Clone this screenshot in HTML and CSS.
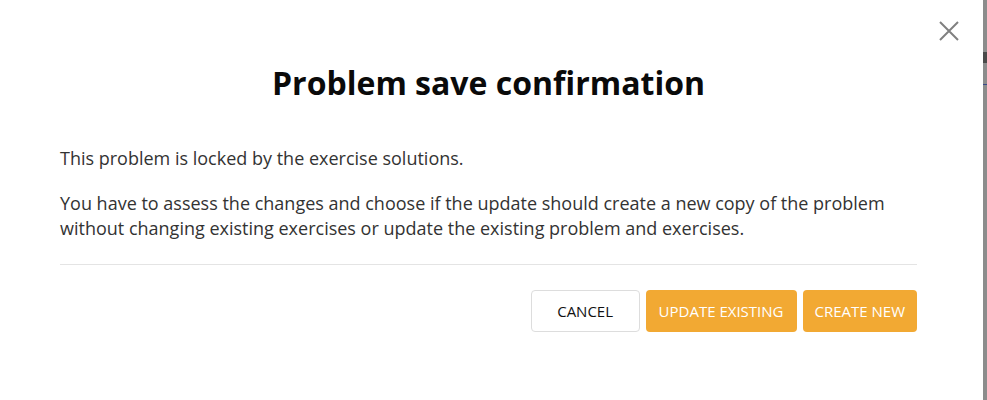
FILE: index.html
```html
<!DOCTYPE html>
<html lang="en">
<head>
<meta charset="utf-8">
<title>Problem save confirmation</title>
<link rel="stylesheet" href="styles.css">
</head>
<body>
<div class="page">
  <div class="modal">
    <button class="close" aria-label="Close">
      <svg width="20" height="20" viewBox="0 0 20 20"><path d="M1 1L19 19M19 1L1 19" stroke="#808080" stroke-width="2" fill="none"/></svg>
    </button>
    <h1 class="title">Problem save confirmation</h1>
    <div class="body">
      <p>This problem is locked by the exercise solutions.</p>
      <p>You have to assess the changes and choose if the update should create a new copy of the problem without changing existing exercises or update the existing problem and exercises.</p>
    </div>
    <div class="divider"></div>
    <div class="actions">
      <button class="btn btn-cancel">CANCEL</button>
      <button class="btn btn-primary btn-wide">UPDATE EXISTING</button>
      <button class="btn btn-primary">CREATE NEW</button>
    </div>
  </div>
  <div class="backdrop">
    <span class="mark mark-dark"></span>
    <span class="mark mark-blue"></span>
  </div>
</div>
</body>
</html>
```

FILE: styles.css
```css
html, body {
  margin: 0;
  padding: 0;
  background: #ffffff;
}
.page {
  display: flex;
  width: 987px;
  height: 400px;
  font-family: "Open Sans", "Liberation Sans", sans-serif;
}
.modal {
  position: relative;
  width: 983px;
  box-sizing: border-box;
  padding: 0 66px 0 60px;
  background: #ffffff;
}
.close {
  position: absolute;
  top: 21px;
  left: 939px;
  padding: 0;
  border: 0;
  background: none;
  width: 20px;
  height: 20px;
  cursor: pointer;
}
.close svg { display: block; }
.title {
  margin: 0;
  padding-top: 61px;
  text-align: center;
  font-size: 32px;
  line-height: 44px;
  font-weight: 700;
  color: #0a0a0a;
}
.body {
  padding-top: 41px;
  font-size: 18px;
  line-height: 25px;
  color: #333333;
}
.body p {
  margin: 0 0 20px 0;
}
.body p:last-child {
  margin-bottom: 0;
}
.divider {
  margin-top: 23px;
  height: 1px;
  background: #e4e4e4;
}
.actions {
  display: flex;
  justify-content: flex-end;
  gap: 6px;
  margin-top: 25px;
}
.btn {
  height: 42px;
  box-sizing: border-box;
  border-radius: 4px;
  font-family: "Open Sans", "Liberation Sans", sans-serif;
  font-size: 15px;
  padding: 0 11px;
  border: 1px solid transparent;
}
.btn-wide {
  padding: 0 12px;
}
.btn-cancel {
  width: 109px;
  background: #ffffff;
  border-color: #dddddd;
  color: #111111;
}
.btn-primary {
  background: #f2a933;
  color: #ffffff;
}
.backdrop {
  position: relative;
  flex: 1;
  background: #8c8c8c;
}
.mark {
  position: absolute;
  left: 0;
  width: 4px;
}
.mark-dark {
  top: 52px;
  height: 11px;
  background: #4a4a4a;
}
.mark-blue {
  top: 84px;
  height: 1px;
  background: #3a4a8a;
}
```
